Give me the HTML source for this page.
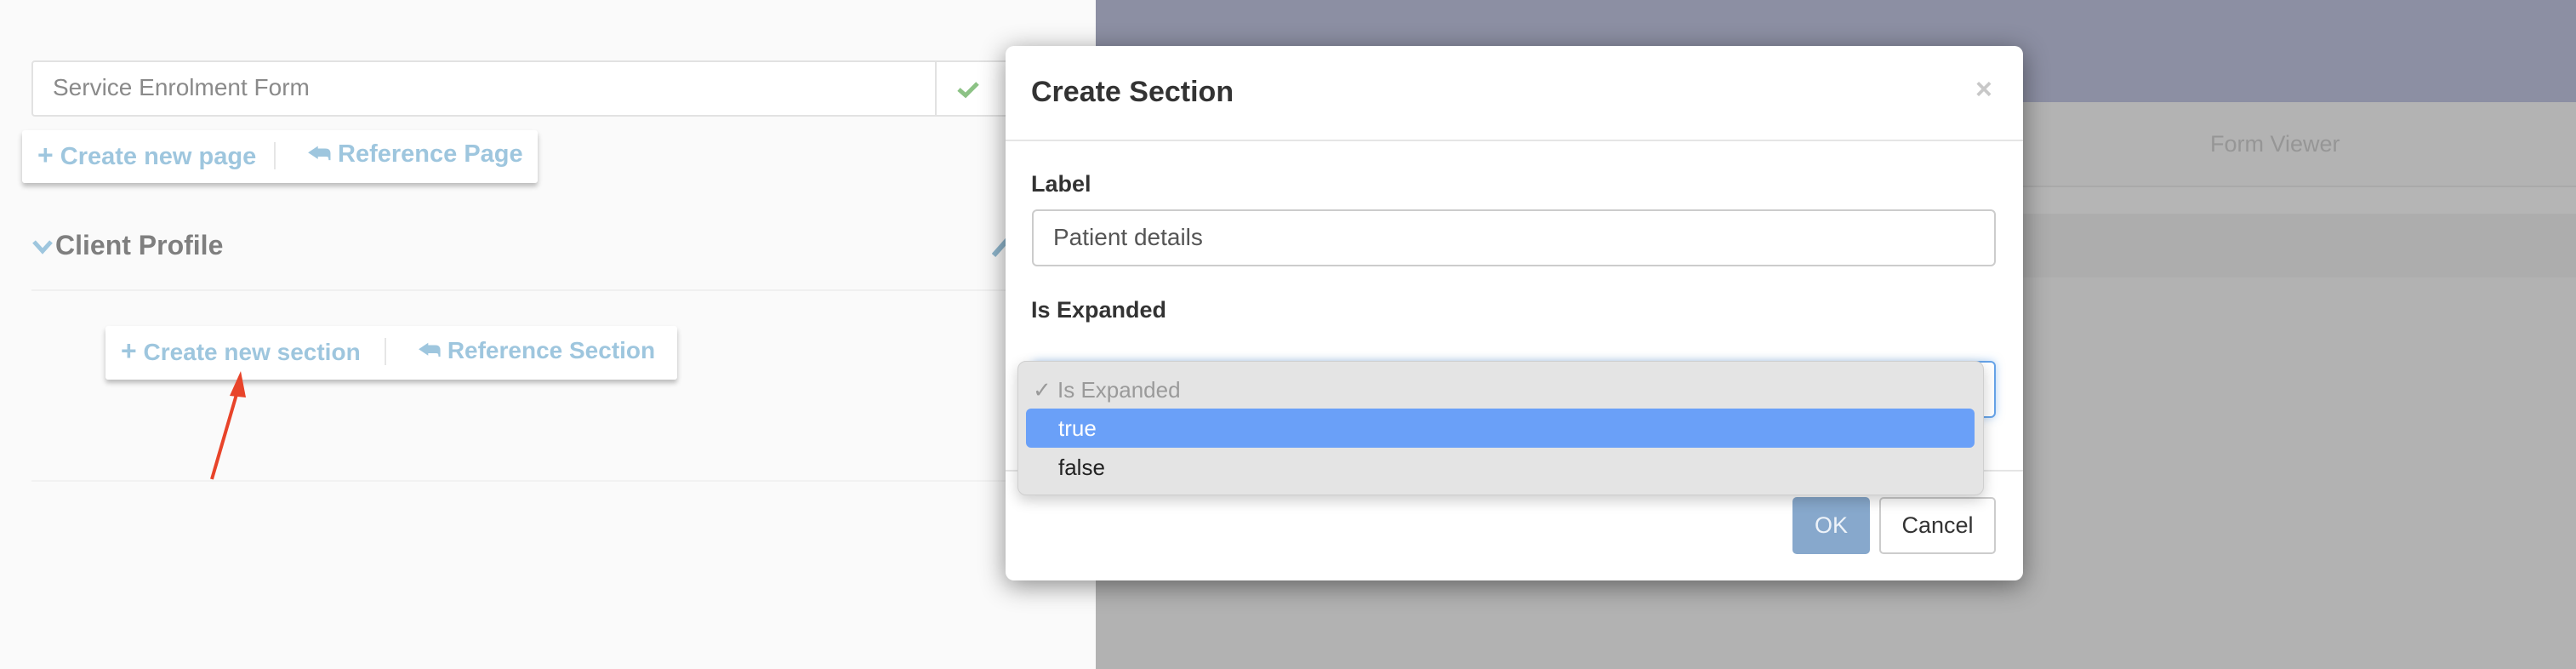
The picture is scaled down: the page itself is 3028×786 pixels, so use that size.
<!DOCTYPE html>
<html><head><meta charset="utf-8"><style>
*{box-sizing:border-box;margin:0;padding:0}
body{width:3028px;height:786px;position:relative;overflow:hidden;font-family:"Liberation Sans",Arial,sans-serif;background:#b2b2b2}
.a{position:absolute}
.bar{background:#fff;box-shadow:0 4px 6px rgba(0,0,0,.25);border-radius:3px}
.lnk{color:#9ec6de;font-weight:bold;font-size:28px;white-space:nowrap}
.pl{font-size:32px}
</style></head><body>
<!-- left panel -->
<div class="a" style="left:0;top:0;width:1288px;height:786px;background:#fafafa"></div>
<div class="a" style="left:37px;top:71px;width:1180px;height:66px;background:#fff;border:2px solid #e2e2e2;border-radius:4px"></div>
<div class="a" style="left:1099px;top:71px;width:2px;height:66px;background:#e2e2e2"></div>
<div class="a" style="left:62px;top:87px;font-size:28px;color:#8a8a8a">Service Enrolment Form</div>
<svg class="a" style="left:1124px;top:94px" width="28" height="22" viewBox="0 0 28 22"><path d="M3 11 L11 18 L25 4" stroke="#8cc285" stroke-width="5" fill="none"/></svg>

<div class="a bar" style="left:26px;top:153px;width:606px;height:62px"></div>
<div class="a lnk" style="left:44px;top:164px;font-size:29px"><span class="pl">+</span> Create new page</div>
<div class="a" style="left:322px;top:167px;width:2px;height:32px;background:#e6e6e6"></div>
<div class="a lnk" style="left:362px;top:165px;font-size:29px">⮪ Reference Page</div>

<svg class="a" style="left:37px;top:280px" width="26" height="20" viewBox="0 0 26 20"><path d="M3 4 L13 15 L23 4" stroke="#9ec6de" stroke-width="5" fill="none"/></svg>
<div class="a" style="left:65px;top:270px;font-size:32px;font-weight:bold;color:#7f7f7f">Client Profile</div>
<svg class="a" style="left:1166px;top:276px" width="20" height="26"><path d="M2 24 L18 6" stroke="#8fb6cc" stroke-width="6"/></svg>
<div class="a" style="left:37px;top:340px;width:1250px;height:2px;background:#f0f0f0"></div>
<div class="a" style="left:37px;top:564px;width:1250px;height:2px;background:#f2f2f2"></div>

<div class="a bar" style="left:124px;top:383px;width:672px;height:63px"></div>
<div class="a lnk" style="left:142px;top:394px"><span class="pl">+</span> Create new section</div>
<div class="a" style="left:452px;top:397px;width:2px;height:32px;background:#e6e6e6"></div>
<div class="a lnk" style="left:492px;top:396px">⮪ Reference Section</div>

<svg class="a" style="left:0;top:0" width="400" height="600"><path d="M249 563 L279 460" stroke="#e8442a" stroke-width="4"/><path d="M283 436 L270 465 L289 467 Z" fill="#e8442a"/></svg>

<!-- right panel -->
<div class="a" style="left:1288px;top:0;width:1740px;height:120px;background:#8c8fa3"></div>
<div class="a" style="left:1288px;top:120px;width:1740px;height:99px;background:#b3b3b3"></div>
<div class="a" style="left:1288px;top:218px;width:1740px;height:2px;background:#a9a9a9"></div>
<div class="a" style="left:1288px;top:220px;width:1740px;height:31px;background:#b5b5b5"></div>
<div class="a" style="left:1288px;top:251px;width:1740px;height:75px;background:#adadad"></div>
<div class="a" style="left:2598px;top:154px;font-size:27px;color:#969696">Form Viewer</div>

<!-- modal -->
<div class="a" style="left:1182px;top:54px;width:1196px;height:628px;background:#fff;border-radius:10px;box-shadow:0 6px 30px rgba(0,0,0,.45)"></div>
<div class="a" style="left:1212px;top:89px;font-size:34px;font-weight:bold;color:#333">Create Section</div>
<div class="a" style="left:2322px;top:86px;font-size:34px;font-weight:bold;color:#c8c8c8">×</div>
<div class="a" style="left:1182px;top:164px;width:1196px;height:2px;background:#e5e5e5"></div>
<div class="a" style="left:1212px;top:201px;font-size:27px;font-weight:bold;color:#333">Label</div>
<div class="a" style="left:1213px;top:246px;width:1133px;height:67px;border:2px solid #ccc;border-radius:6px"></div>
<div class="a" style="left:1238px;top:263px;font-size:28px;color:#555">Patient details</div>
<div class="a" style="left:1212px;top:349px;font-size:27px;font-weight:bold;color:#333">Is Expanded</div>
<div class="a" style="left:1213px;top:424px;width:1133px;height:67px;border:2px solid #66a3e8;border-radius:6px;box-shadow:0 0 10px rgba(102,163,232,.5)"></div>
<div class="a" style="left:1182px;top:552px;width:1196px;height:2px;background:#e5e5e5"></div>
<div class="a" style="left:2107px;top:584px;width:91px;height:67px;background:#87a8cc;border-radius:5px;color:#eef3f9;font-size:27px;line-height:67px;text-align:center">OK</div>
<div class="a" style="left:2209px;top:584px;width:137px;height:67px;border:2px solid #ccc;border-radius:5px;color:#333;font-size:27px;line-height:63px;text-align:center">Cancel</div>

<!-- dropdown -->
<div class="a" style="left:1196px;top:424px;width:1136px;height:158px;background:#e4e4e4;border:1px solid #cfcfcf;border-radius:10px;box-shadow:0 6px 16px rgba(0,0,0,.2)"></div>
<div class="a" style="left:1214px;top:443px;font-size:26px;color:#9a9a9a">✓ Is Expanded</div>
<div class="a" style="left:1206px;top:480px;width:1115px;height:46px;background:#6aa0f8;border-radius:6px"></div>
<div class="a" style="left:1244px;top:488px;font-size:26px;color:#fff">true</div>
<div class="a" style="left:1244px;top:534px;font-size:26px;color:#222">false</div>
</body></html>
